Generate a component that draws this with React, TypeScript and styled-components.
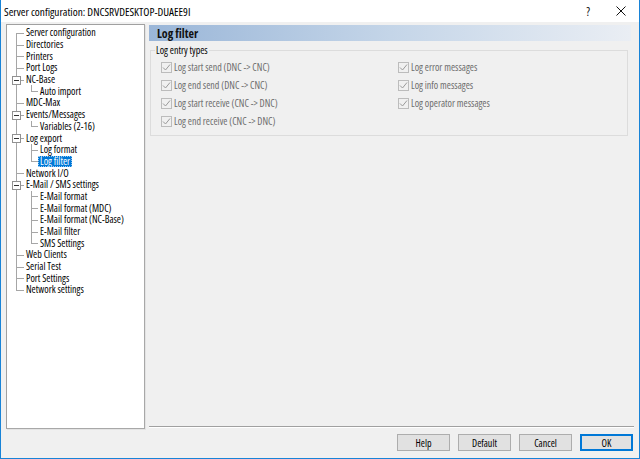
import React from 'react';
import styled, { createGlobalStyle, css } from 'styled-components';

const Global = createGlobalStyle`
  html, body { margin: 0; padding: 0; background: #f0f0f0; }
  * { box-sizing: border-box; }
`;

const UI = `"Open Sans", "Liberation Sans", Arial, sans-serif`;

const Window = styled.div`
  width: 640px;
  height: 459px;
  border: 1px solid #1883d7;
  border-top: none;
  background: #f0f0f0;
  display: flex;
  flex-direction: column;
  font-family: ${UI};
  font-stretch: 75%;
  overflow: hidden;
`;

const TitleBar = styled.div`
  height: 22px;
  background: #ffffff;
  display: flex;
  align-items: center;
  padding-left: 3px;
  font-size: 11.3px;
  color: #000;
`;

const TitleText = styled.div`
  flex: 1;
`;

const TitleButton = styled.div<{ $w: number }>`
  width: ${p => p.$w}px;
  display: flex;
  justify-content: center;
  font-size: 12px;
  color: #111;
`;

const Main = styled.div`
  display: flex;
  padding: 2px 0 0 5px;
  height: 407px;
`;

const Tree = styled.div`
  width: 139px;
  height: 405px;
  background: #fff;
  border: 1px solid #a0a0a0;
  border-right-color: #a8a8a8;
  border-bottom-color: #a8a8a8;
  box-shadow: 1px 1px 0 #e3e3e3;
  padding: 2px 0 0 1px;
  font-size: 10px;
  color: #000;
`;

const Row = styled.div`
  display: flex;
  height: 11.7px;
  align-items: center;
`;

const Guide = styled.div<{ $w: number; $off: number; $v: 'full' | 'top' | 'bottom' | 'none'; $h: boolean }>`
  position: relative;
  width: ${p => p.$w}px;
  height: 100%;
  flex: none;
  &::before {
    content: '';
    position: absolute;
    left: ${p => p.$off}px;
    width: 1px;
    background: #a6a6a6;
    ${p => p.$v === 'full' && css`top: 0; bottom: 0;`}
    ${p => p.$v === 'top' && css`top: 0; height: 50%;`}
    ${p => p.$v === 'bottom' && css`top: 50%; bottom: 0;`}
    ${p => p.$v === 'none' && css`display: none;`}
  }
  &::after {
    content: '';
    position: absolute;
    top: 50%;
    left: ${p => p.$off}px;
    right: 0;
    height: 1px;
    background: #a6a6a6;
    display: ${p => (p.$h ? 'block' : 'none')};
  }
`;

const Expander = styled.div<{ $off: number }>`
  position: absolute;
  z-index: 1;
  left: ${p => p.$off - 4}px;
  top: calc(50% - 4px);
  width: 9px;
  height: 9px;
  border: 1px solid #919191;
  background: #fff;
  &::after {
    content: '';
    position: absolute;
    left: 1px;
    right: 1px;
    top: 3px;
    height: 1px;
    background: #333;
  }
`;

const Label = styled.span<{ $sel?: boolean }>`
  padding: 0 2px;
  line-height: 11px;
  white-space: nowrap;
  ${p =>
    p.$sel &&
    css`
      background: #0078d7;
      color: #fff;
      outline: 1px dotted #99c9ef;
      outline-offset: -1px;
    `}
`;

const Right = styled.div`
  flex: 1;
  display: flex;
  flex-direction: column;
  margin-left: 4px;
  margin-right: 4px;
  padding-top: 1px;
`;

const Band = styled.div`
  height: 16px;
  margin-right: 4px;
  background: linear-gradient(to right, #9ab6d8 0%, #c4d5e8 50%, #eaeef4 100%);
  display: flex;
  align-items: center;
  padding-left: 8px;
  font-weight: bold;
  font-size: 12px;
  color: #111;
`;

const Group = styled.fieldset`
  margin: 2px 7px 0 1px;
  padding: 1px 0 5px 4px;
  border: 1px solid #dcdcdc;
  min-width: 0;
`;

const Legend = styled.legend`
  font-size: 10px;
  padding: 0 1px;
  color: #000;
`;

const CheckGrid = styled.div`
  display: grid;
  padding-left: 6px;
  grid-template-columns: 237px 1fr;
  grid-auto-flow: column;
  grid-template-rows: repeat(4, 18px);
`;

const CheckRow = styled.div`
  display: flex;
  align-items: center;
  gap: 2px;
  font-size: 10px;
  color: #6d6d6d;
`;

const Box = styled.span`
  width: 11px;
  height: 11px;
  border: 1px solid #bcbcbc;
  background: #f0f0f0;
  display: flex;
  align-items: center;
  justify-content: center;
  flex: none;
`;

const Spacer = styled.div`
  flex: 1;
`;

const Separator = styled.div`
  height: 2px;
  border-top: 1px solid #a0a0a0;
  border-bottom: 1px solid #ffffff;
  margin-bottom: 1px;
  margin-right: 1px;
`;

const ButtonBar = styled.div`
  display: flex;
  justify-content: flex-end;
  gap: 8px;
  padding: 5px 6px 0 0;
`;

const Button = styled.button<{ $default?: boolean }>`
  width: 53px;
  height: 17px;
  padding: 0;
  font-family: ${UI};
  font-stretch: 75%;
  font-size: 10px;
  color: #000;
  background: #e1e1e1;
  border: 1px solid ${p => (p.$default ? '#0078d7' : '#adadad')};
  box-shadow: ${p => (p.$default ? 'inset 0 0 0 1px #0078d7' : 'none')};
`;

type Item = {
  label: string;
  level: 0 | 1;
  exp?: boolean;
  lastChild?: boolean;
  sel?: boolean;
};

const items: Item[] = [
  { label: 'Server configuration', level: 0 },
  { label: 'Directories', level: 0 },
  { label: 'Printers', level: 0 },
  { label: 'Port Logs', level: 0 },
  { label: 'NC-Base', level: 0, exp: true },
  { label: 'Auto import', level: 1, lastChild: true },
  { label: 'MDC-Max', level: 0 },
  { label: 'Events/Messages', level: 0, exp: true },
  { label: 'Variables (2-16)', level: 1, lastChild: true },
  { label: 'Log export', level: 0, exp: true },
  { label: 'Log format', level: 1 },
  { label: 'Log filter', level: 1, lastChild: true, sel: true },
  { label: 'Network I/O', level: 0 },
  { label: 'E-Mail / SMS settings', level: 0, exp: true },
  { label: 'E-Mail format', level: 1 },
  { label: 'E-Mail format (MDC)', level: 1 },
  { label: 'E-Mail format (NC-Base)', level: 1 },
  { label: 'E-Mail filter', level: 1 },
  { label: 'SMS Settings', level: 1, lastChild: true },
  { label: 'Web Clients', level: 0 },
  { label: 'Serial Test', level: 0 },
  { label: 'Port Settings', level: 0 },
  { label: 'Network settings', level: 0 },
];

const checks = [
  'Log start send (DNC -> CNC)',
  'Log end send (DNC -> CNC)',
  'Log start receive (CNC -> DNC)',
  'Log end receive (CNC -> DNC)',
  'Log error messages',
  'Log info messages',
  'Log operator messages',
];

const Check = () => (
  <svg width="9" height="9" viewBox="0 0 9 9">
    <polyline points="1,4.5 3.5,7 8,1.5" fill="none" stroke="#9a9a9a" strokeWidth="1" />
  </svg>
);

const CloseIcon = () => (
  <svg width="10" height="10" viewBox="0 0 10 10">
    <path d="M0.5 0.5 L9.5 9.5 M9.5 0.5 L0.5 9.5" stroke="#111" strokeWidth="1" fill="none" />
  </svg>
);

export default function App() {
  const last = items.length - 1;
  return (
    <>
      <Global />
      <Window>
        <TitleBar>
          <TitleText>Server configuration: DNCSRVDESKTOP-DUAEE9I</TitleText>
          <TitleButton $w={30}>?</TitleButton>
          <TitleButton $w={36}>
            <CloseIcon />
          </TitleButton>
        </TitleBar>
        <Main>
          <Tree>
            {items.map((it, i) => {
              const rootV = i === 0 ? 'bottom' : i === last ? 'top' : 'full';
              return (
                <Row key={it.label}>
                  <Guide $w={16} $off={8} $v={rootV} $h={it.level === 0}>
                    {it.exp && <Expander $off={8} />}
                  </Guide>
                  {it.level === 1 && (
                    <Guide $w={14} $off={7} $v={it.lastChild ? 'top' : 'full'} $h />
                  )}
                  <Label $sel={it.sel}>{it.label}</Label>
                </Row>
              );
            })}
          </Tree>
          <Right>
            <Band>Log filter</Band>
            <Group>
              <Legend>Log entry types</Legend>
              <CheckGrid>
                {checks.map(c => (
                  <CheckRow key={c}>
                    <Box>
                      <Check />
                    </Box>
                    {c}
                  </CheckRow>
                ))}
              </CheckGrid>
            </Group>
            <Spacer />
            <Separator />
          </Right>
        </Main>
        <ButtonBar>
          <Button>Help</Button>
          <Button>Default</Button>
          <Button>Cancel</Button>
          <Button $default>OK</Button>
        </ButtonBar>
      </Window>
    </>
  );
}
